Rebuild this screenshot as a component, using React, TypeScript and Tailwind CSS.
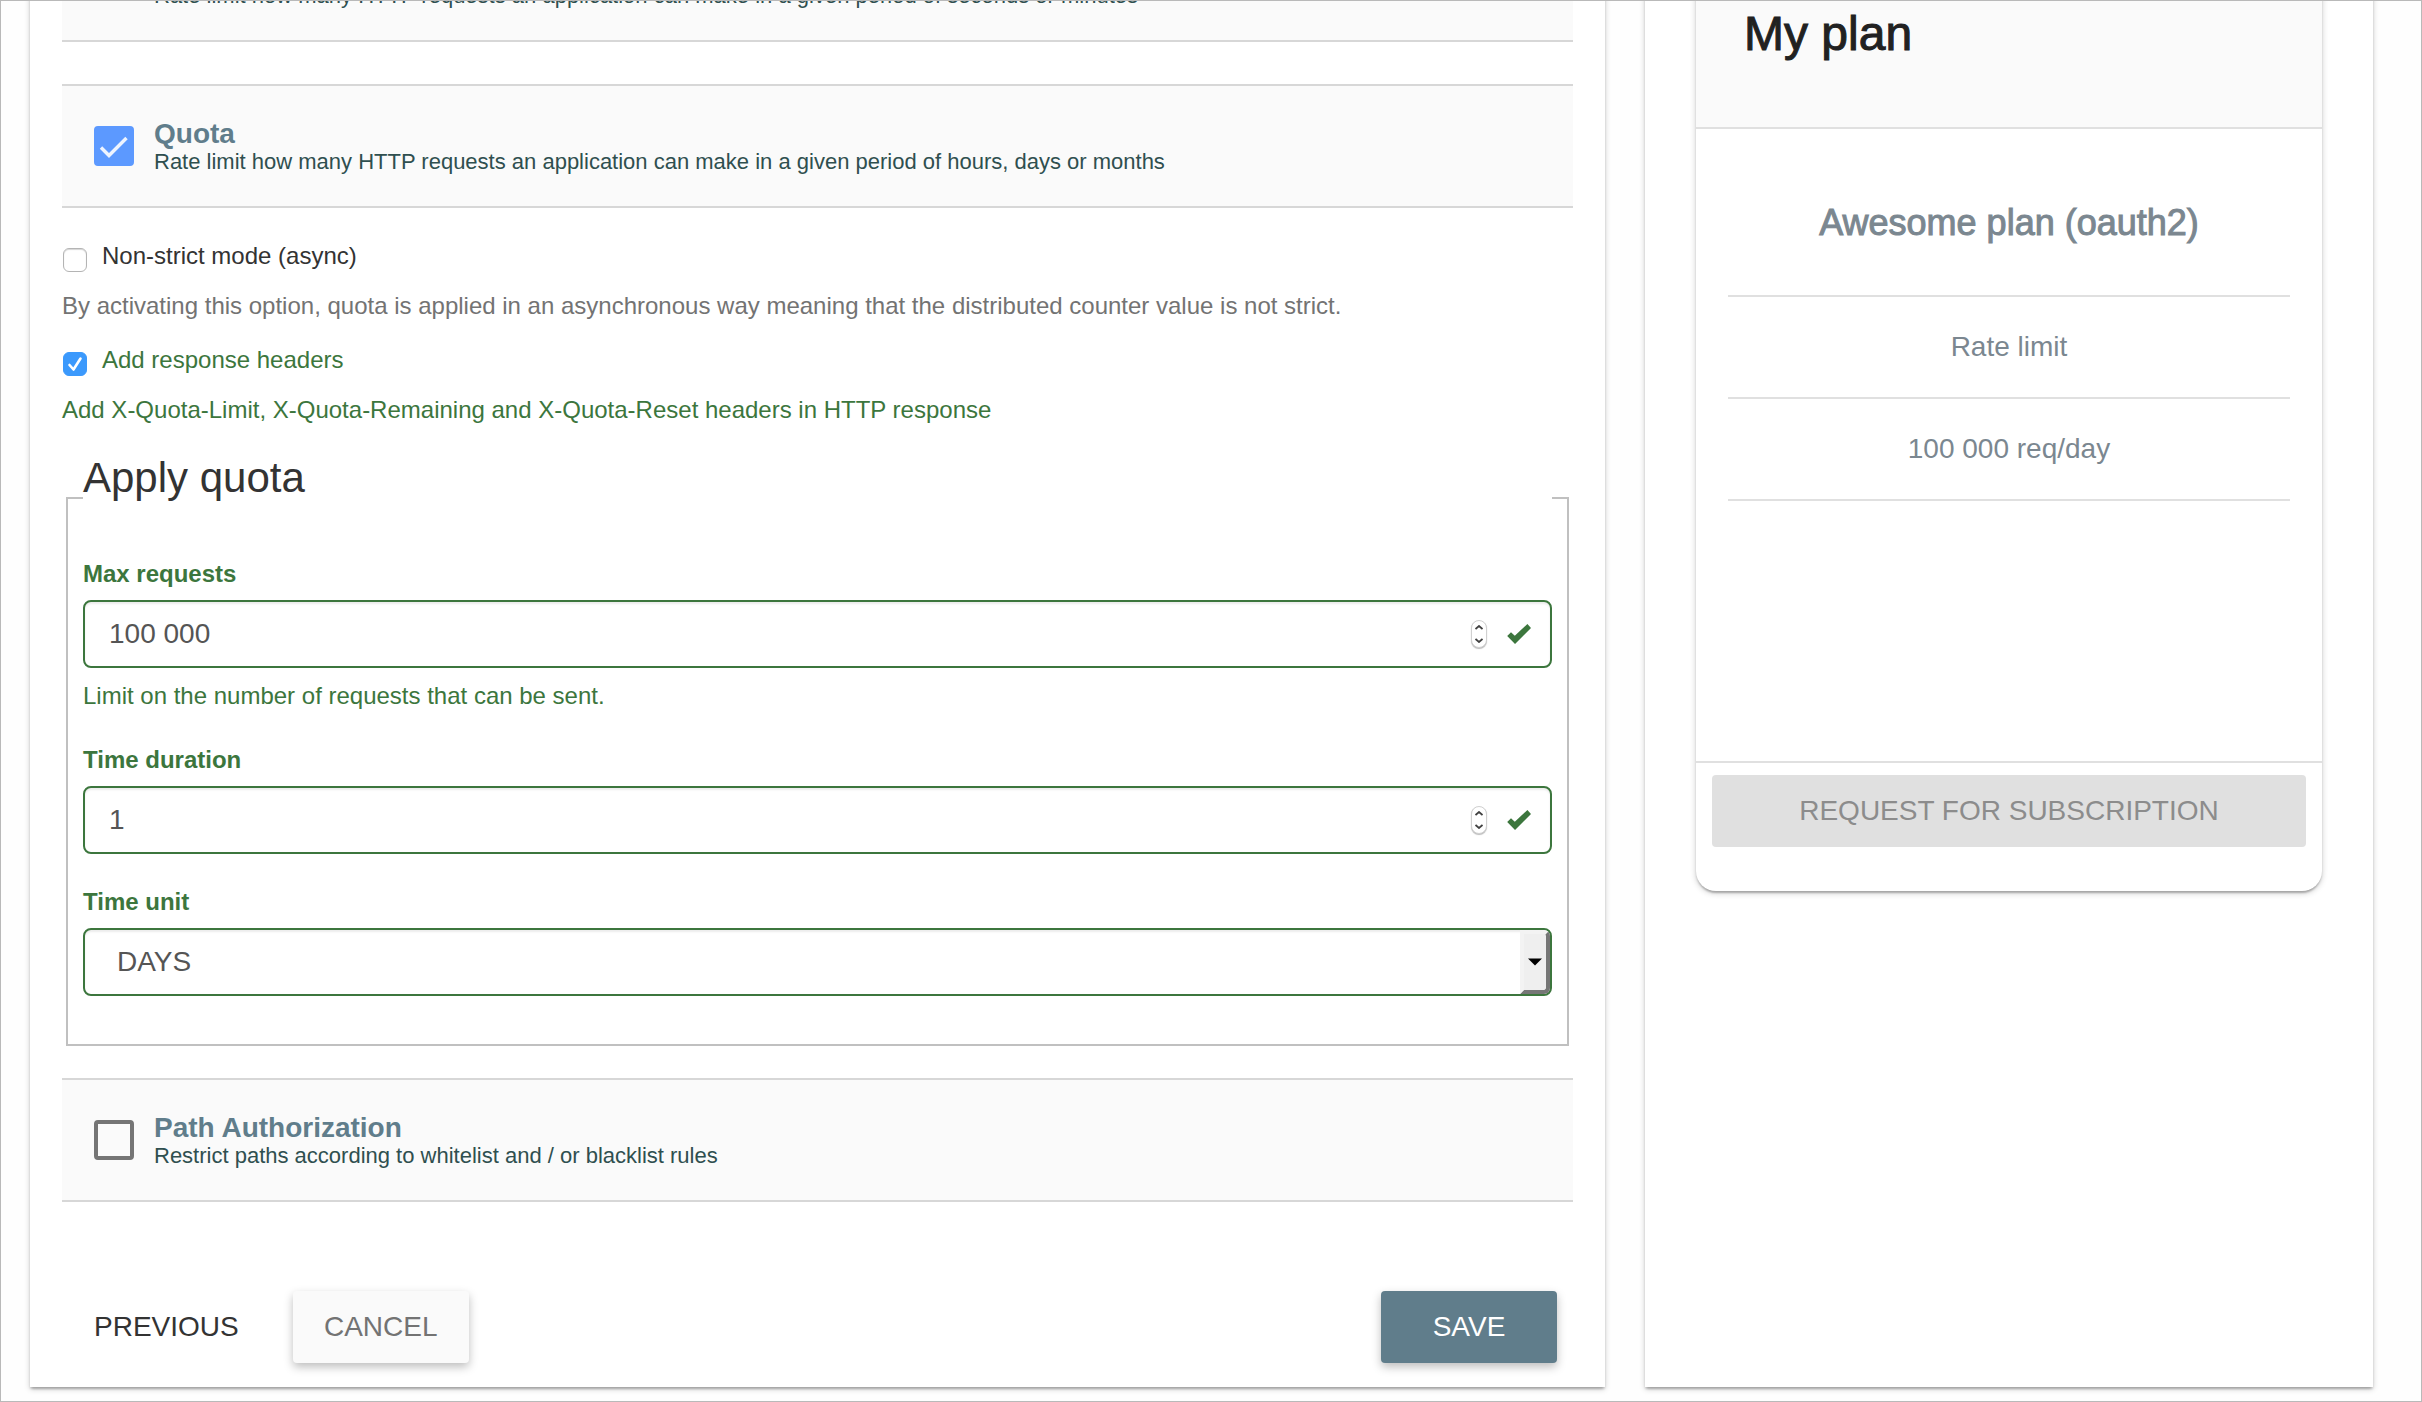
import { useState, type ReactNode } from "react";

function CheckIcon({ className }: { className: string }) {
  return (
    <svg viewBox="0 0 40 40" className={className} fill="none" stroke="currentColor" aria-hidden="true">
      <path d="M7 21.5 L15 29.5 L32.5 12" strokeWidth="3.4" />
    </svg>
  );
}

function PolicyHeader({
  id,
  title,
  description,
  initial,
}: {
  id: string;
  title: string;
  description: string;
  initial: boolean;
}) {
  const [checked, setChecked] = useState(initial);
  return (
    <section className="flex h-[124px] items-center border-y-2 border-[#d7d7d7] bg-[#fafafa] pl-8">
      <span className="grid size-10 shrink-0">
        <input
          id={id}
          type="checkbox"
          checked={checked}
          onChange={(e) => setChecked(e.target.checked)}
          className="peer col-start-1 row-start-1 size-10 appearance-none rounded-[4px] border-4 border-[#757575] checked:border-[#5c99ff] checked:bg-[#5c99ff]"
        />
        <CheckIcon className="pointer-events-none col-start-1 row-start-1 size-10 text-[#eef4ff] opacity-0 peer-checked:opacity-100" />
      </span>
      <label htmlFor={id} className="flex flex-col pt-1 pl-5">
        <span className="text-[28px] leading-7 font-bold text-[#607d8b]">{title}</span>
        <span className="text-[22px] leading-7 text-[#2f4f4f]">{description}</span>
      </label>
    </section>
  );
}

function SmallCheckbox({
  id,
  label,
  help,
  initial,
  tone,
}: {
  id: string;
  label: string;
  help: string;
  initial: boolean;
  tone: "plain" | "valid";
}) {
  const [checked, setChecked] = useState(initial);
  return (
    <div className={tone === "valid" ? "text-[#3c763d]" : "text-[#737373]"}>
      <div className="flex h-8 items-center">
        <span className="mt-2 ml-px grid size-6 shrink-0">
          <input
            id={id}
            type="checkbox"
            checked={checked}
            onChange={(e) => setChecked(e.target.checked)}
            className="peer col-start-1 row-start-1 size-6 appearance-none rounded-md border border-[#b4b4b4] bg-white shadow-[inset_0_1px_1px_#d5d5d5] checked:border-[#3b99fc] checked:bg-[#3b99fc] checked:shadow-none"
          />
          <svg
            viewBox="0 0 24 24"
            className="pointer-events-none col-start-1 row-start-1 size-6 text-white opacity-0 peer-checked:opacity-100"
            fill="none"
            stroke="currentColor"
            strokeWidth="2.6"
            strokeLinecap="round"
            strokeLinejoin="round"
            aria-hidden="true"
          >
            <path d="M6.5 13 L10.5 17.5 L17.5 6.5" />
          </svg>
        </span>
        <label htmlFor={id} className={tone === "valid" ? "pl-[15px]" : "pl-[15px] text-[#333333]"}>
          {label}
        </label>
      </div>
      <p className="mt-[18px] leading-8">{help}</p>
    </div>
  );
}

function Stepper({ onStep }: { onStep: (delta: number) => void }) {
  return (
    <span className="flex h-7 w-4 flex-col rounded-lg border border-[#d0d0d0] bg-white text-[#404040] shadow-[0_1px_1px_#bbbbbb]">
      <button type="button" aria-label="Increase" onClick={() => onStep(1)} className="flex flex-1 items-center justify-center">
        <svg viewBox="0 0 8 5" className="h-[5px] w-2" fill="none" stroke="currentColor" strokeWidth="1.8" aria-hidden="true">
          <path d="M0.5 4 L4 1 L7.5 4" />
        </svg>
      </button>
      <button type="button" aria-label="Decrease" onClick={() => onStep(-1)} className="flex flex-1 items-center justify-center">
        <svg viewBox="0 0 8 5" className="h-[5px] w-2" fill="none" stroke="currentColor" strokeWidth="1.8" aria-hidden="true">
          <path d="M0.5 1 L4 4 L7.5 1" />
        </svg>
      </button>
    </span>
  );
}

function Field({ id, label, children }: { id: string; label: string; children: ReactNode }) {
  return (
    <div>
      <label htmlFor={id} className="block pb-2.5 leading-8 font-bold">
        {label}
      </label>
      {children}
    </div>
  );
}

const control =
  "flex h-[68px] items-center rounded-lg border-2 border-[#3c763d] bg-white shadow-[inset_0_2px_2px_rgba(0,0,0,0.075)]";

function NumberInput({ id, initial }: { id: string; initial: number }) {
  const [value, setValue] = useState(initial);
  const text = String(value).replace(/\B(?=(\d{3})+(?!\d))/g, " ");
  return (
    <div className={control}>
      <input
        id={id}
        type="text"
        inputMode="numeric"
        value={text}
        onChange={(e) => setValue(Number(e.target.value.replace(/\D/g, "")))}
        className="h-full min-w-0 flex-1 bg-transparent pl-6 text-[28px] text-[#555555] outline-none"
      />
      <Stepper onStep={(delta) => setValue(Math.max(0, value + delta))} />
      <svg viewBox="0 0 24 20" className="mr-[19px] ml-5 h-5 w-6" fill="#3c763d" aria-hidden="true">
        <path d="M0.2 12 L4 8.2 L7.8 11.8 L20.4 0 L24 3.9 L8 20 Z" />
      </svg>
    </div>
  );
}

function PlanRow({ children }: { children: ReactNode }) {
  return <li className="border-b-2 border-[#e0e0e0] py-8 text-[28px] leading-9">{children}</li>;
}

export default function App() {
  return (
    <div className="grid min-h-screen grid-cols-[1575fr_728fr] items-stretch gap-10 overflow-hidden border border-[#b9b9b9] bg-[#fefefe] pr-12 pb-3.5 pl-[29px] font-['Liberation_Sans',Arial,sans-serif] text-[24px] leading-8">
      <main className="-mt-24 min-w-0 bg-white px-8 pt-[13px] pb-6 shadow-[0_2px_6px_rgba(0,0,0,0.2),0_2px_2px_rgba(0,0,0,0.14),0_4px_2px_-2px_rgba(0,0,0,0.12)]">
        <PolicyHeader
          id="rate-limit"
          title="Rate limit"
          description="Rate limit how many HTTP requests an application can make in a given period of seconds or minutes"
          initial={false}
        />
        <div className="mt-[42px]">
          <PolicyHeader
            id="quota"
            title="Quota"
            description="Rate limit how many HTTP requests an application can make in a given period of hours, days or months"
            initial
          />
        </div>

        <div className="flex flex-col gap-[22px] pt-8">
          <SmallCheckbox
            id="async"
            label="Non-strict mode (async)"
            help="By activating this option, quota is applied in an asynchronous way meaning that the distributed counter value is not strict."
            initial={false}
            tone="plain"
          />
          <SmallCheckbox
            id="headers"
            label="Add response headers"
            help="Add X-Quota-Limit, X-Quota-Remaining and X-Quota-Reset headers in HTTP response"
            initial
            tone="valid"
          />
        </div>

        <fieldset className="mx-1 mt-[22px] border-2 border-[#c0c0c0] px-[15px] pb-12 text-[#3c763d]">
          <legend className="w-full pb-10 text-[42px] leading-[60px] text-[#333333]">Apply quota</legend>
          <div className="flex flex-col gap-8 pt-2.5">
            <Field id="max-requests" label="Max requests">
              <NumberInput id="max-requests" initial={100000} />
              <p className="pt-3">Limit on the number of requests that can be sent.</p>
            </Field>
            <Field id="duration" label="Time duration">
              <NumberInput id="duration" initial={1} />
            </Field>
            <Field id="unit" label="Time unit">
              <div className={control}>
                <div className="grid h-full flex-1 items-center">
                  <select
                    id="unit"
                    defaultValue="DAYS"
                    className="col-start-1 row-start-1 h-full w-full appearance-none bg-transparent pl-8 text-[28px] text-[#555555] outline-none"
                  >
                    <option>HOURS</option>
                    <option>DAYS</option>
                    <option>MONTHS</option>
                  </select>
                  <span className="pointer-events-none col-start-1 row-start-1 flex h-full w-[30px] items-center justify-center justify-self-end rounded-r-md border-4 border-t-[#f3f3f3] border-r-[#767676] border-b-[#767676] border-l-[#f3f3f3] bg-[#efefef]">
                    <svg viewBox="0 0 14 8" className="h-2 w-3.5" fill="#000000" aria-hidden="true">
                      <path d="M0 0.5 H14 L7 7.5 Z" />
                    </svg>
                  </span>
                </div>
              </div>
            </Field>
          </div>
        </fieldset>

        <div className="mt-8">
          <PolicyHeader
            id="path"
            title="Path Authorization"
            description="Restrict paths according to whitelist and / or blacklist rules"
            initial={false}
          />
        </div>

        <div className="mt-[89px] flex items-center px-4 text-[28px] font-medium">
          <button type="button" className="h-[72px] px-4 text-[#333333]">
            PREVIOUS
          </button>
          <button
            type="button"
            className="ml-[38px] h-[72px] w-44 rounded-[4px] bg-[#fafafa] text-[#737373] shadow-[0_4px_10px_rgba(0,0,0,0.26)]"
          >
            CANCEL
          </button>
          <button
            type="button"
            className="ml-auto h-[72px] w-44 rounded-[4px] bg-[#607d8b] text-white shadow-[0_4px_10px_rgba(0,0,0,0.26)]"
          >
            SAVE
          </button>
        </div>
      </main>

      <aside className="-mt-24 min-w-0 bg-white px-[51px] shadow-[0_2px_6px_rgba(0,0,0,0.2),0_2px_2px_rgba(0,0,0,0.14),0_4px_2px_-2px_rgba(0,0,0,0.12)]">
        <div className="rounded-b-[20px] pb-11 shadow-[0_2px_6px_rgba(0,0,0,0.2),0_2px_2px_rgba(0,0,0,0.14),0_4px_2px_-2px_rgba(0,0,0,0.12)]">
          <h2 className="border-b-2 border-[#e0e0e0] bg-[#fafafa] px-12 pt-[97px] pb-[61px] text-[48px] leading-[64px] font-medium text-[#212121] [-webkit-text-stroke:1px]">
            My plan
          </h2>
          <div className="mx-8 text-center font-medium text-[#7b8790]">
            <h3 className="border-b-2 border-[#e0e0e0] pt-[70px] pb-12 text-[36px] leading-[48px] [-webkit-text-stroke:1px]">
              Awesome plan (oauth2)
            </h3>
            <ul>
              <PlanRow>Rate limit</PlanRow>
              <PlanRow>100 000 req/day</PlanRow>
            </ul>
          </div>
          <div className="mt-[260px] border-t-2 border-[#e0e0e0] px-4 pt-3">
            <button
              type="button"
              disabled
              className="h-[72px] w-full rounded-[4px] bg-[#e0e0e0] text-[28px] font-medium text-[#8c8c8c]"
            >
              REQUEST FOR SUBSCRIPTION
            </button>
          </div>
        </div>
      </aside>
    </div>
  );
}
